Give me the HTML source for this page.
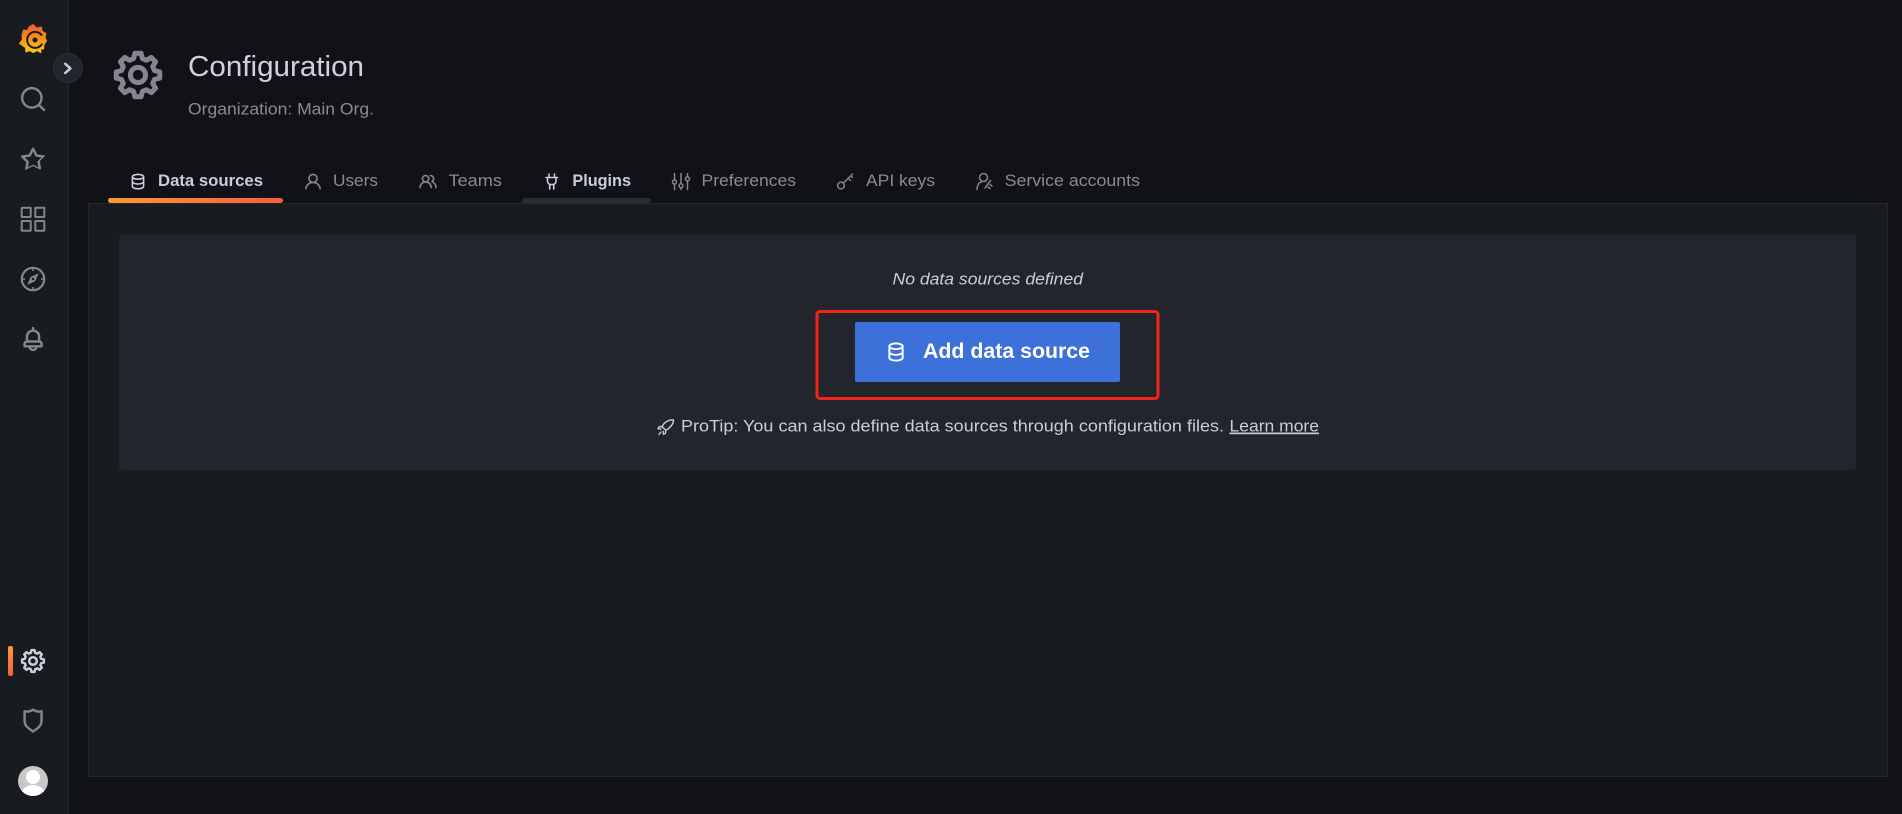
<!DOCTYPE html>
<html lang="en"><head><meta charset="utf-8"><title>Configuration: Data sources</title>
<style>
html,body{margin:0;padding:0;width:1902px;height:814px;overflow:hidden;background:#111217}
svg{display:block}
text{font-family:"Liberation Sans",sans-serif}
</style></head><body>
<svg width="1902" height="814" viewBox="0 0 1902 814" xmlns="http://www.w3.org/2000/svg">
<defs>
<linearGradient id="og" x1="0" y1="0" x2="1" y2="0"><stop offset="0" stop-color="#ff9830"/><stop offset="1" stop-color="#f55f3e"/></linearGradient>
<linearGradient id="ogv" x1="0" y1="0" x2="0" y2="1"><stop offset="0" stop-color="#ff9830"/><stop offset="1" stop-color="#f55f3e"/></linearGradient>
<linearGradient id="logo" x1="0" y1="0" x2="0" y2="1"><stop offset="0" stop-color="#f05a28"/><stop offset="1" stop-color="#fbca0a"/></linearGradient>
<g id="cog" fill="none" stroke-width="5" stroke-linejoin="round">
<path d="M-3.06 -21.79 L3.06 -21.79 L4.4 -16.42 L8.5 -14.72 L13.24 -17.57 L17.57 -13.24 L14.72 -8.5 L16.42 -4.4 L21.79 -3.06 L21.79 3.06 L16.42 4.4 L14.72 8.5 L17.57 13.24 L13.24 17.57 L8.5 14.72 L4.4 16.42 L3.06 21.79 L-3.06 21.79 L-4.4 16.42 L-8.5 14.72 L-13.24 17.57 L-17.57 13.24 L-14.72 8.5 L-16.42 4.4 L-21.79 3.06 L-21.79 -3.06 L-16.42 -4.4 L-14.72 -8.5 L-17.57 -13.24 L-13.24 -17.57 L-8.5 -14.72 L-4.4 -16.42Z"/>
<circle cx="0" cy="0" r="7.6"/>
</g>
<path id="db" d="M12,2C8,2,4,3.37,4,6V18c0,2.63,4,4,8,4s8-1.37,8-4V6C20,3.37,16,2,12,2Zm6,16c0,.71-2.28,2-6,2s-6-1.29-6-2V14.73A13.16,13.16,0,0,0,12,16a13.16,13.16,0,0,0,6-1.27Zm0-6c0,.71-2.28,2-6,2s-6-1.29-6-2V8.73A13.16,13.16,0,0,0,12,10a13.16,13.16,0,0,0,6-1.27ZM12,8C8.28,8,6,6.71,6,6s2.28-2,6-2,6,1.29,6,2S15.72,8,12,8Z"/>
</defs>

<!-- page -->
<rect width="1902" height="814" fill="#111217"/>

<!-- sidebar -->
<rect x="0" y="0" width="68" height="814" fill="#181b1f"/>
<rect x="68" y="0" width="1" height="814" fill="#25272c"/>

<!-- logo -->
<path d="M33 24.5 L36.500 28 L41.500 27 L42 31 L46 33.500 L45 37.500 L46.500 41 L44 44.500 L43.500 49 L40.500 49 L41 52.500 L37 50.500 L33 52.500 L29.500 50.500 L26 52 L25.500 47.500 L19.500 43.500 L22.500 39.500 L22 35.500 L23.500 30 L27.500 30.500 L29 27Z" fill="url(#logo)" stroke="url(#logo)" stroke-width="1" stroke-linejoin="round"/>
<path d="M41.500 35 A8 8 0 1 0 41.800 44.300" fill="none" stroke="#1c1b1f" stroke-width="2" stroke-linecap="round"/>
<circle cx="35" cy="40" r="2.500" fill="#1c1b1f"/>

<!-- search -->
<g transform="translate(18.5,84.5) scale(1.213)" fill="#85858f"><path d="M21.71,20.29,18,16.61A9,9,0,1,0,16.61,18l3.68,3.68a1,1,0,0,0,1.42,0A1,1,0,0,0,21.71,20.29ZM11,18a7,7,0,1,1,7-7A7,7,0,0,1,11,18Z"/></g>
<!-- star -->
<g transform="translate(18.5,144.5) scale(1.213)" fill="#85858f"><path d="M22,9.67A1,1,0,0,0,21.14,9l-5.69-.83L12.9,3a1,1,0,0,0-1.8,0L8.55,8.16,2.86,9a1,1,0,0,0-.81.68,1,1,0,0,0,.25,1l4.13,4-1,5.68A1,1,0,0,0,6.9,20.44L12,17.77l5.1,2.67a.93.93,0,0,0,.46.12,1,1,0,0,0,.59-.19,1,1,0,0,0,.4-1l-1-5.68,4.13-4A1,1,0,0,0,22,9.67Zm-6.15,4a1,1,0,0,0-.29.88l.72,4.2-3.76-2a1.06,1.06,0,0,0-.94,0l-3.76,2,.72-4.2a1,1,0,0,0-.29-.88l-3-3,4.21-.61a1,1,0,0,0,.76-.55L12,5.7l1.88,3.82a1,1,0,0,0,.76.55l4.21.61Z"/></g>
<!-- apps -->
<g fill="none" stroke="#85858f" stroke-width="2">
<rect x="21.700" y="207.700" width="9" height="9.300" rx=".6"/><rect x="35.300" y="207.700" width="9" height="9.300" rx=".6"/>
<rect x="21.700" y="221" width="9" height="9.700" rx=".6"/><rect x="35.300" y="221" width="9" height="9.700" rx=".6"/>
</g>
<!-- compass -->
<g fill="none" stroke="#85858f">
<circle cx="33" cy="279" r="11.200" stroke-width="2.200"/>
<path d="M33 268.500v2.500M33 287v2.500M22.500 279h2.500M41 279h2.500" stroke-width="1.500"/>
</g>
<path d="M38.800 273.200 L35.200 281.200 L27.200 284.800 L30.800 276.800Z" fill="#85858f"/>
<circle cx="33" cy="279" r="1.200" fill="#181b1f"/>
<!-- bell -->
<g transform="translate(18.5,324.5) scale(1.213)" fill="#85858f"><path d="M18,13.18V10a6,6,0,0,0-5-5.91V3a1,1,0,0,0-2,0V4.09A6,6,0,0,0,6,10v3.18A3,3,0,0,0,4,16v2a1,1,0,0,0,1,1H8.14a4,4,0,0,0,7.72,0H19a1,1,0,0,0,1-1V16A3,3,0,0,0,18,13.18ZM8,10a4,4,0,0,1,8,0v3H8Zm4,10a2,2,0,0,1-1.72-1h3.44A2,2,0,0,1,12,20Zm6-3H6V16a1,1,0,0,1,1-1H17a1,1,0,0,1,1,1Z"/></g>

<!-- active config -->
<rect x="8" y="646" width="5" height="30" rx="2" fill="url(#ogv)"/>
<g transform="translate(33,661) scale(.5)" stroke="#ccccdc"><use href="#cog"/></g>
<!-- shield -->
<g transform="translate(18.5,706) scale(1.213)" fill="#85858f"><path d="M19.63,3.65a1,1,0,0,0-.84-.2,8,8,0,0,1-6.22-1.27,1,1,0,0,0-1.14,0A8,8,0,0,1,5.21,3.45a1,1,0,0,0-.84.2A1,1,0,0,0,4,4.43v7.45a9,9,0,0,0,3.77,7.33l3.65,2.6a1,1,0,0,0,1.16,0l3.65-2.6A9,9,0,0,0,20,11.88V4.43A1,1,0,0,0,19.63,3.65ZM18,11.88a7,7,0,0,1-2.93,5.7L12,19.77l-3.07-2.19A7,7,0,0,1,6,11.88V5.58a10,10,0,0,0,6-1.39,10,10,0,0,0,6,1.39Z"/></g>
<!-- avatar -->
<clipPath id="av"><circle cx="33" cy="781" r="15"/></clipPath>
<circle cx="33" cy="781" r="15" fill="#c7c7c7"/>
<g clip-path="url(#av)" fill="#fff"><circle cx="33" cy="777" r="7"/><ellipse cx="33" cy="795" rx="12" ry="10"/></g>

<!-- expand button -->
<circle cx="68" cy="68" r="14.5" fill="#22252b" stroke="#2b2e34" stroke-width="1"/>
<path d="M65.200 63.800 L70.400 68.400 L65.200 73" fill="none" stroke="#ccccdc" stroke-width="2.500" stroke-linecap="round" stroke-linejoin="round"/>

<!-- header -->
<g transform="translate(138,75)" stroke="#85858f"><use href="#cog"/></g>
<text x="188" y="76" font-size="29" fill="#d0d0de" textLength="176" lengthAdjust="spacingAndGlyphs">Configuration</text>
<text x="188" y="114.500" font-size="17" fill="#8a8a96" textLength="186" lengthAdjust="spacingAndGlyphs">Organization: Main Org.</text>

<!-- panel -->
<rect x="88.500" y="203.500" width="1799" height="573" fill="#181b1f" stroke="#25272c" stroke-width="1"/>

<!-- tabs -->
<rect x="108" y="198" width="175" height="5" rx="2.500" fill="url(#og)"/>
<rect x="522" y="198" width="129" height="5" rx="2.500" fill="#2b2d33"/>

<g transform="translate(128.400,172) scale(.8)" fill="#ccccdc"><use href="#db"/></g>
<text x="158" y="186" font-size="17" font-weight="700" fill="#c8ccdc" textLength="105" lengthAdjust="spacingAndGlyphs">Data sources</text>

<g transform="translate(303.400,172) scale(.8)" fill="#85858f"><path d="M15.71,12.71a6,6,0,1,0-7.42,0,10,10,0,0,0-6.22,8.18,1,1,0,0,0,2,.22,8,8,0,0,1,15.9,0,1,1,0,0,0,1,.89h.11a1,1,0,0,0,.88-1.1A10,10,0,0,0,15.71,12.71ZM12,12a4,4,0,1,1,4-4A4,4,0,0,1,12,12Z"/></g>
<text x="333" y="186" font-size="17" fill="#8a8a94" textLength="45" lengthAdjust="spacingAndGlyphs">Users</text>

<g transform="translate(418.400,172) scale(.8)" fill="#85858f"><path d="M12.3,12.22A4.92,4.92,0,0,0,14,8.5a5,5,0,0,0-10,0,4.92,4.92,0,0,0,1.7,3.72A8,8,0,0,0,1,19.5a1,1,0,0,0,2,0,6,6,0,0,1,12,0,1,1,0,0,0,2,0A8,8,0,0,0,12.3,12.22ZM9,11.5a3,3,0,1,1,3-3A3,3,0,0,1,9,11.5Zm9.74.32A5,5,0,0,0,15,3.5a1,1,0,0,0,0,2,3,3,0,0,1,3,3,3,3,0,0,1-1.5,2.59,1,1,0,0,0-.5.84,1,1,0,0,0,.45.86l.39.26.13.07a7,7,0,0,1,4,6.38,1,1,0,0,0,2,0A9,9,0,0,0,18.74,11.82Z"/></g>
<text x="448.500" y="186" font-size="17" fill="#8a8a94" textLength="53.500" lengthAdjust="spacingAndGlyphs">Teams</text>

<g fill="none" stroke="#ccccdc" stroke-width="1.600" stroke-linecap="round" stroke-linejoin="round">
<path d="M549 174v3.500M554.500 174v3.500M546 177.500h11.500M547.500 177.500v3.500c0 2 1.500 3.500 3 3.500h2.500c1.500 0 3-1.500 3-3.500v-3.500M549.700 184.500v4.500M553.700 184.500v4.500"/>
</g>
<text x="572.400" y="186" font-size="17" font-weight="700" fill="#c8ccdc" textLength="58.600" lengthAdjust="spacingAndGlyphs">Plugins</text>

<g fill="none" stroke="#85858f" stroke-width="1.500" stroke-linecap="round">
<path d="M674.500 173.500v6M674.500 184.500v5M681 173.500v10M681 188v1.500M687.500 173.500v3M687.500 181v8.500"/>
<circle cx="674.500" cy="182" r="2"/><circle cx="681" cy="185.800" r="2"/><circle cx="687.500" cy="178.800" r="2"/>
</g>
<text x="701.500" y="186" font-size="17" fill="#8a8a94" textLength="94.500" lengthAdjust="spacingAndGlyphs">Preferences</text>

<g fill="none" stroke="#85858f" stroke-width="1.500" stroke-linecap="round">
<circle cx="841" cy="185.500" r="3.400"/><path d="M843.500 183 L852.500 174M848.500 178.500l2 2M851 176l1.500 1.500"/>
</g>
<text x="866" y="186" font-size="17" fill="#8a8a94" textLength="69" lengthAdjust="spacingAndGlyphs">API keys</text>

<g fill="none" stroke="#85858f" stroke-width="1.500" stroke-linecap="round">
<circle cx="983.500" cy="177.500" r="4"/><path d="M977 189.500c0-4 2-7 5-8M990.500 180.500l-5.500 7.500M988 187l2 1.500M990 184.500l2 1.500"/>
</g>
<text x="1004.600" y="186" font-size="17" fill="#8a8a94" textLength="135.400" lengthAdjust="spacingAndGlyphs">Service accounts</text>

<!-- card -->
<rect x="119" y="235" width="1737" height="235" rx="3" fill="#22252b"/>
<text x="892.500" y="284.500" font-size="17" font-style="italic" fill="#ccccdc" textLength="190.500" lengthAdjust="spacingAndGlyphs">No data sources defined</text>

<!-- annotation -->
<rect x="817" y="311.500" width="341" height="87" rx="3" fill="none" stroke="#f5221a" stroke-width="3"/>

<!-- button -->
<rect x="855" y="322" width="265" height="60" rx="2" fill="#3d71d9"/>
<g transform="translate(884.600,340.600) scale(.95)" fill="#fff"><use href="#db"/></g>
<text x="923" y="358" font-size="21" font-weight="700" fill="#fff" textLength="167" lengthAdjust="spacingAndGlyphs">Add data source</text>

<!-- protip -->
<g fill="none" stroke="#ccccdc" stroke-width="1.400" stroke-linejoin="round" stroke-linecap="round">
<path d="M673.500 420c-4-.3-7.500 1.200-10 4.200l-1.500 2.300 3.800 3.800 2.400-1.500c3-2.500 5.500-5.500 5.300-8.800ZM662 426.500l-3 .3-1 2 3 .2M665.800 430.300l-.3 3-2 1-.2-3M661 432l-2 2.500"/>
</g>
<text x="681" y="431.500" font-size="17" fill="#ccccdc" textLength="543" lengthAdjust="spacingAndGlyphs">ProTip: You can also define data sources through configuration files.</text>
<text x="1229.500" y="431.500" font-size="17" fill="#ccccdc" text-decoration="underline" textLength="89.500" lengthAdjust="spacingAndGlyphs">Learn more</text>
</svg>
</body></html>
